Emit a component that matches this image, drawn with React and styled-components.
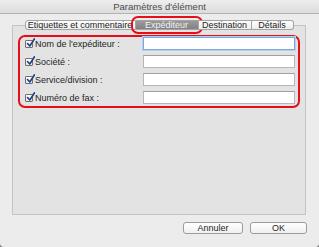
import React from "react";
import { styled, createGlobalStyle } from "styled-components";

const GlobalStyle = createGlobalStyle`
  html, body {
    margin: 0;
    padding: 0;
    background: #7d7d7d;
  }
  * {
    box-sizing: border-box;
  }
`;

const Window = styled.div`
  width: 319px;
  height: 247px;
  background-color: #ececec;
  border-radius: 0 0 4px 4px;
  display: flex;
  flex-direction: column;
  font-family: "Liberation Sans", Arial, sans-serif;
  font-size: 9px;
  color: #1e1e1e;
  overflow: hidden;
`;

const TitleBar = styled.div`
  height: 14px;
  background: linear-gradient(#eeeeee, #dcdcdc);
  border-bottom: 1px solid #b3b3b3;
  display: flex;
  align-items: center;
  justify-content: center;
  color: #4a4a4a;
  font-size: 9.5px;
`;

const Content = styled.div`
  padding: 6px 13px 0 12px;
  display: flex;
  flex-direction: column;
`;

const TabRow = styled.div`
  display: flex;
  justify-content: center;
  height: 10px;
  margin-bottom: -5px;
  position: relative;
  z-index: 1;
`;

const Tab = styled.div`
  height: 10px;
  width: ${(p) => p.w}px;
  display: flex;
  align-items: center;
  justify-content: center;
  border: 1px solid #a3a3a3;
  border-left: ${(p) => (p.first ? "1px solid #a3a3a3" : "none")};
  border-radius: ${(p) =>
    p.first ? "3px 0 0 3px" : p.last ? "0 3px 3px 0" : "0"};
  background: ${(p) =>
    p.active
      ? "linear-gradient(#9a9a9a, #828282)"
      : "linear-gradient(#fdfdfd, #eeeeee)"};
  color: ${(p) => (p.active ? "#f2f2f2" : "#1e1e1e")};
  white-space: nowrap;
  position: relative;
`;

const TabHighlight = styled.div`
  position: absolute;
  left: -5px;
  right: -5px;
  top: -5px;
  bottom: -5px;
  border: 2px solid #e60f19;
  border-radius: 7px;
  pointer-events: none;
`;

const Panel = styled.div`
  height: 190px;
  background-color: #e3e3e3;
  border: 1px solid #c3c3c3;
  padding: 9px 5px 0 5px;
`;

const Group = styled.div`
  border: 2px solid #e60f19;
  border-radius: 7px;
  padding: 0 3px 2px 5px;
  display: flex;
  flex-direction: column;
  gap: 5px;
`;

const Row = styled.div`
  display: flex;
  align-items: center;
  height: 13px;
`;

const Label = styled.label`
  display: flex;
  align-items: center;
  gap: 2px;
  flex: 1;
  white-space: nowrap;
`;

const Box = styled.span`
  width: 8px;
  height: 8px;
  border: 1px solid #6f6f6f;
  border-radius: 1px;
  background: linear-gradient(#ffffff, #e6e6e6);
  position: relative;
  flex: none;
`;

const Check = styled.svg`
  position: absolute;
  left: 0px;
  top: -3px;
  width: 9px;
  height: 10px;
`;

const Field = styled.div`
  width: 152px;
  height: 13px;
  background: #ffffff;
  border: 1px solid ${(p) => (p.focus ? "#7ea6d6" : "#b6b6b6")};
  border-top-color: ${(p) => (p.focus ? "#7ea6d6" : "#a0a0a0")};
  box-shadow: ${(p) => (p.focus ? "0 0 0 1px #b5cfee" : "none")};
`;

const Footer = styled.div`
  display: flex;
  justify-content: flex-end;
  gap: 7px;
  margin-top: 7px;
  margin-right: -1px;
`;

const Button = styled.div`
  width: ${(p) => p.w}px;
  height: 12px;
  border: 1px solid #9c9c9c;
  border-radius: 3px;
  background: linear-gradient(#ffffff, #f0f0f0);
  display: flex;
  align-items: center;
  justify-content: center;
  color: #1e1e1e;
  font-size: 9px;
`;

const tabs = [
  { label: "Etiquettes et commentaire", w: 111 },
  { label: "Expéditeur", w: 63, active: true },
  { label: "Destination", w: 53 },
  { label: "Détails", w: 42 },
];

const fields = [
  "Nom de l'expéditeur :",
  "Société :",
  "Service/division :",
  "Numéro de fax :",
];

function CheckBox() {
  return (
    <Box>
      <Check viewBox="0 0 9 10">
        <path
          d="M1.5 5.5 L3.8 8 L8.5 0.8"
          fill="none"
          stroke="#1d3d86"
          strokeWidth="1.6"
          strokeLinecap="round"
          strokeLinejoin="round"
        />
      </Check>
    </Box>
  );
}

export default function App() {
  return (
    <>
      <GlobalStyle />
      <Window>
        <TitleBar>Paramètres d'élément</TitleBar>
        <Content>
          <TabRow>
            {tabs.map((t, i) => (
              <Tab
                key={t.label}
                w={t.w}
                first={i === 0}
                last={i === tabs.length - 1}
                active={t.active}
              >
                {t.label}
                {t.active && <TabHighlight />}
              </Tab>
            ))}
          </TabRow>
          <Panel>
            <Group>
              {fields.map((f, i) => (
                <Row key={f}>
                  <Label>
                    <CheckBox />
                    {f}
                  </Label>
                  <Field focus={i === 0} />
                </Row>
              ))}
            </Group>
          </Panel>
          <Footer>
            <Button w={60}>Annuler</Button>
            <Button w={57}>OK</Button>
          </Footer>
        </Content>
      </Window>
    </>
  );
}
